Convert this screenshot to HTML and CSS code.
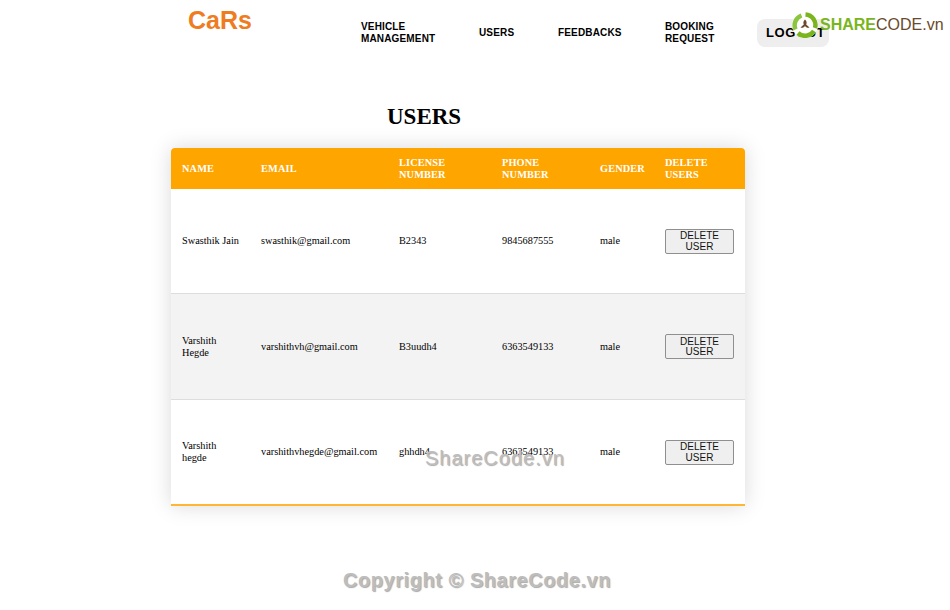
FILE: index.html
```html
<!DOCTYPE html>
<html lang="en">
<head>
<meta charset="utf-8">
<title>Users</title>
<link rel="stylesheet" href="styles.css">
</head>
<body>
<header class="topbar">
  <div class="brand">CaRs</div>
  <nav class="nav">
    <a class="nav-link nav-vehicle">VEHICLE<br>MANAGEMENT</a>
    <a class="nav-link nav-users">USERS</a>
    <a class="nav-link nav-feedbacks">FEEDBACKS</a>
    <a class="nav-link nav-booking">BOOKING<br>REQUEST</a>
    <a class="logout">LOGOUT</a>
  </nav>
</header>
<main class="content">
  <h1 class="title">USERS</h1>
  <table class="users">
    <colgroup>
      <col class="c1"><col class="c2"><col class="c3"><col class="c4"><col class="c5"><col class="c6">
    </colgroup>
    <thead>
      <tr><th>NAME</th><th>EMAIL</th><th>LICENSE NUMBER</th><th>PHONE NUMBER</th><th>GENDER</th><th>DELETE USERS</th></tr>
    </thead>
    <tbody>
      <tr class="r1"><td>Swasthik Jain</td><td>swasthik@gmail.com</td><td>B2343</td><td>9845687555</td><td>male</td><td><button class="del">DELETE USER</button></td></tr>
      <tr class="r2"><td>Varshith Hegde</td><td>varshithvh@gmail.com</td><td>B3uudh4</td><td>6363549133</td><td>male</td><td><button class="del">DELETE USER</button></td></tr>
      <tr class="r3"><td>Varshith hegde</td><td>varshithvhegde@gmail.com</td><td>ghhdh4</td><td>6363549133</td><td>male</td><td><button class="del">DELETE USER</button></td></tr>
    </tbody>
  </table>
</main>
<div class="wm-logo">
  <svg class="wm-icon" width="26" height="26" viewBox="0 0 26 26">
    <circle cx="13" cy="13" r="13" fill="#fff"/>
    <path d="M13.5 2.500A10.500 10.500 0 0 1 23 16" fill="none" stroke="#7ab51d" stroke-width="4.500"/>
    <path d="M22 19A10.500 10.500 0 0 1 6 21" fill="none" stroke="#7ab51d" stroke-width="4.500"/>
    <path d="M3.500 17.500A10.500 10.500 0 0 1 9.500 3.500" fill="none" stroke="#8cc63f" stroke-width="4.500"/>
    <path d="M13 7.500c1.800 1.500 2 3.500 1.200 5l3.300 3c-1.800.8-3.500 0-4.500-1.500-1 1.500-2.700 2.300-4.500 1.500l3.300-3c-.8-1.500-.6-3.500 1.200-5z" fill="#6b4a2b"/>
  </svg>
  <span class="wm-share">SHARE</span><span class="wm-code">CODE.vn</span>
</div>
<div class="wm-mid">ShareCode.vn</div>
<div class="wm-copy">Copyright © ShareCode.vn</div>
</body>
</html>
```
FILE: styles.css
```css
* { box-sizing: border-box; }
html, body { margin: 0; padding: 0; }
body {
  width: 950px;
  height: 610px;
  overflow: hidden;
  background: #fff;
  position: relative;
  font-family: "Liberation Serif", serif;
}
.topbar {
  display: flex;
  height: 64px;
  padding-left: 188px;
}
.brand {
  width: 173px;
  padding-top: 7px;
  font: bold 25px/26px "Liberation Sans", sans-serif;
  color: #ee7d22;
}
.nav {
  display: flex;
  align-items: center;
  height: 64px;
  font: bold 10px/12px "Liberation Sans", sans-serif;
  color: #000;
  letter-spacing: 0.15px;
}
.nav-link { display: block; margin-top: 2px; }
.nav-vehicle { width: 118px; }
.nav-users { width: 79px; }
.nav-feedbacks { width: 107px; }
.nav-booking { width: 92px; }
.logout {
  width: 72px;
  height: 28px;
  margin-top: 2px;
  padding-left: 9px;
  background: #eee;
  border-radius: 8px;
  font: bold 13px/28px "Liberation Sans", sans-serif;
  letter-spacing: 0.6px;
}
.content { padding-left: 171px; }
.title {
  margin: 40px 0 0 216px;
  height: 44px;
  font: bold 23px/25px "Liberation Serif", serif;
  color: #000;
}
.users {
  width: 574px;
  table-layout: fixed;
  border-collapse: collapse;
  border-bottom: 2px solid #ffb733;
  box-shadow: 0 0 20px rgba(0, 0, 0, 0.15);
  font-size: 10.3px;
  line-height: 12px;
  color: #000;
}
.c1 { width: 79px; }
.c2 { width: 138px; }
.c3 { width: 103px; }
.c4 { width: 98px; }
.c5 { width: 65px; }
.c6 { width: 91px; }
.users th {
  height: 41px;
  padding: 0 11px;
  background: #ffa500;
  color: #fff;
  font-size: 10.3px;
  text-align: left;
  letter-spacing: 0.15px;
}
.users th:first-child { border-top-left-radius: 4px; }
.users th:last-child { border-top-right-radius: 4px; }
.users td { padding: 1px 11px 0; }
.users td:first-child { padding-right: 8px; }
.users tbody tr { border-bottom: 1px solid #ddd; background: #fff; }
.users .r1 { height: 104px; }
.users .r2 { height: 106px; background: #f3f3f3; }
.users .r3 { height: 106px; border-bottom: 0; }
.del {
  display: block;
  width: 69px;
  height: 25px;
  padding: 1px 0 0;
  background: #efefef;
  border: 1px solid #8f8f8f;
  border-radius: 2px;
  font: 10px/10.5px "Liberation Sans", sans-serif;
  color: #111;
}
.wm-logo {
  position: absolute;
  left: 792px;
  top: 12px;
  display: flex;
  align-items: center;
  height: 26px;
  font: 16px/26px "Liberation Sans", sans-serif;
}
.wm-icon { display: block; margin-right: 2px; }
.wm-share { font-weight: bold; color: #7ab51d; }
.wm-code { color: #6b4a2b; }
.wm-mid, .wm-copy {
  position: absolute;
  font-family: "Liberation Sans", sans-serif;
  color: #bdbdbd;
  text-shadow: 1px 1px 1px #aaa;
  white-space: nowrap;
}
.wm-mid { left: 425px; top: 447px; font-size: 20px; line-height: 23px; letter-spacing: 1px; }
.wm-copy { left: 343px; top: 569px; font-size: 20px; line-height: 23px; font-weight: bold; letter-spacing: 0.55px; }
```
